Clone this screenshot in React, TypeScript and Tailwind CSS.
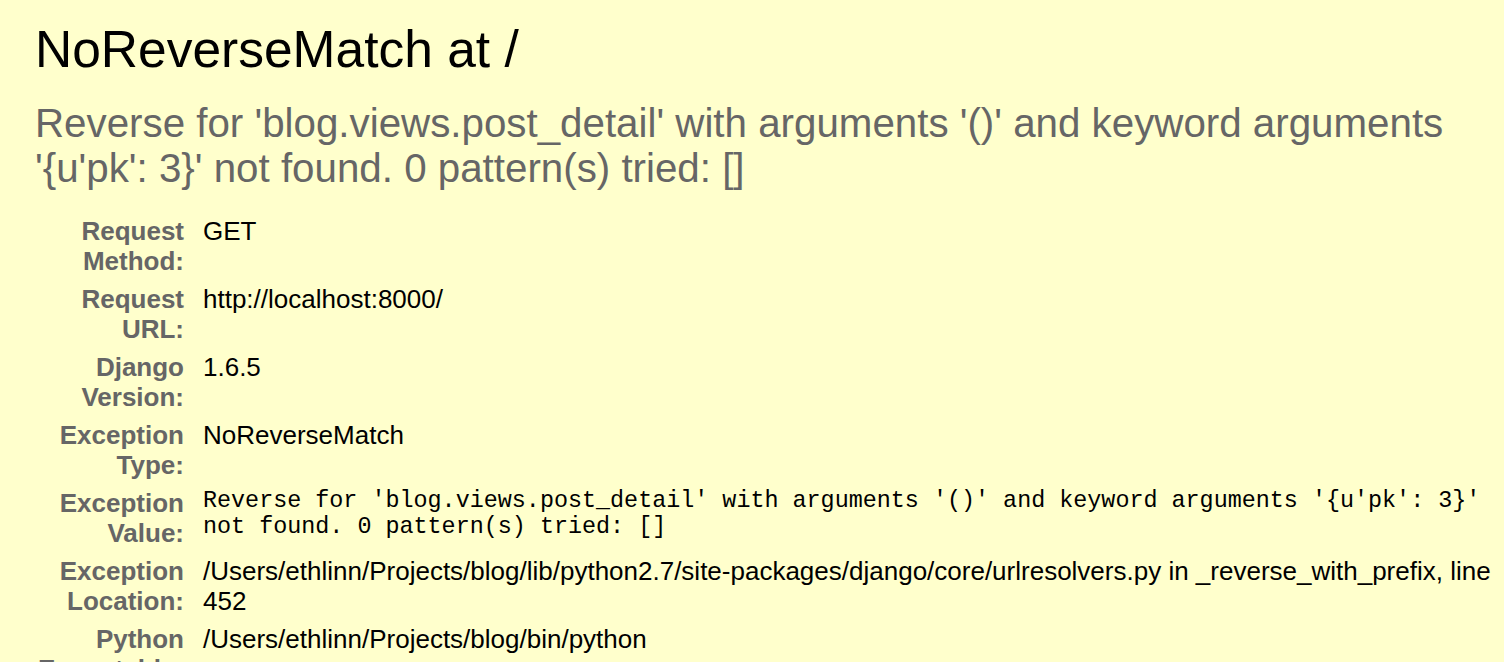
const ROWS: { label: string; value: string; mono?: boolean }[] = [
  { label: 'Request Method:', value: 'GET' },
  { label: 'Request URL:', value: 'http://localhost:8000/' },
  { label: 'Django Version:', value: '1.6.5' },
  { label: 'Exception Type:', value: 'NoReverseMatch' },
  {
    label: 'Exception Value:',
    value:
      "Reverse for 'blog.views.post_detail' with arguments '()' and keyword arguments '{u'pk': 3}' not found. 0 pattern(s) tried: []",
    mono: true,
  },
  {
    label: 'Exception Location:',
    value:
      '/Users/ethlinn/Projects/blog/lib/python2.7/site-packages/django/core/urlresolvers.py in _reverse_with_prefix, line 452',
  },
  { label: 'Python Executable:', value: '/Users/ethlinn/Projects/blog/bin/python' },
  { label: 'Python Version:', value: '2.7.5' },
];

export default function App() {
  return (
    <div className="h-[662px] overflow-hidden bg-[#ffffcc] pl-[35px] pt-[23px] font-['Liberation_Sans',Arial,sans-serif] text-black">
      {/* ── Summary ───────────────────────────────────────────── */}
      <h1 className="text-[51.5px] font-normal leading-[52px]">NoReverseMatch at /</h1>
      <h2 className="mt-[26px] text-[40.3px] font-normal leading-[45px] text-[#666]">
        Reverse for 'blog.views.post_detail' with arguments '()' and keyword arguments '{"{"}u'pk': 3{"}"}' not
        found. 0 pattern(s) tried: []
      </h2>

      {/* ── Meta table ────────────────────────────────────────── */}
      <table className="mt-[21px] w-full border-collapse">
        <tbody>
          {ROWS.map((row) => (
            <tr key={row.label}>
              <th className="w-[168px] py-1 pr-[19px] text-right align-top text-[26px] font-bold leading-[30px] text-[#666]">
                {row.label}
              </th>
              <td className="py-1 align-top text-[26px] leading-[30px]">
                {row.mono ? (
                  <pre className="whitespace-pre-wrap font-['Liberation_Mono','Courier_New',monospace] text-[23.4px] leading-[26px]">
                    {row.value}
                  </pre>
                ) : (
                  row.value
                )}
              </td>
            </tr>
          ))}
        </tbody>
      </table>
    </div>
  );
}
